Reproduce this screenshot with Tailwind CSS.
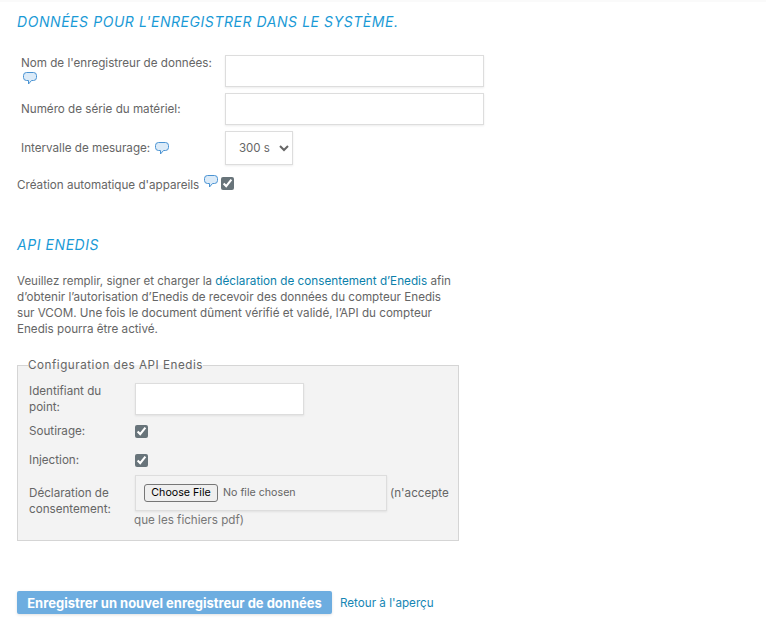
<!DOCTYPE html>
<html lang="fr">
<head>
<meta charset="utf-8">
<script src="https://cdn.jsdelivr.net/npm/@tailwindcss/browser@4"></script>
</head>
<body class="bg-white font-['Inter',sans-serif] text-[11.65px] leading-[16px] text-[#666]">
<svg class="hidden"><symbol id="b" viewBox="0 0 14 13"><path d="M3.500 .5h7a3 3 0 0 1 3 3v2a3 3 0 0 1-3 3H8.500L5.500 12V8.500h-2a3 3 0 0 1-3-3v-2a3 3 0 0 1 3-3z" fill="#dcebf8" stroke="#4a93d2" stroke-width="1"/></symbol></svg>
<div class="w-[766px] h-[626px] overflow-hidden pl-[17px]">
  <div class="h-[2px] -ml-[17px] bg-[#fafafa]"></div>
  <h2 class="mt-[12px] h-[16px] text-[14px] leading-[16px] italic tracking-[0.56px] text-[#1a9ad6] font-normal">DONNÉES POUR L'ENREGISTRER DANS LE SYSTÈME.</h2>

  <div class="mt-[25px] ml-[4px] flex">
    <div class="w-[204px]"><div>Nom de l'enregistreur de données:</div><svg class="mt-[1px] ml-[2px] w-[14px] h-[13px]"><use href="#b"/></svg></div>
    <input type="text" class="w-[259px] h-[32px] bg-white border border-[#ddd] shadow-[0_1px_2px_rgba(0,0,0,0.08)]">
  </div>
  <div class="mt-[6px] ml-[4px] flex items-center">
    <div class="w-[204px]">Numéro de série du matériel:</div>
    <input type="text" class="w-[259px] h-[32px] bg-white border border-[#ddd] shadow-[0_1px_2px_rgba(0,0,0,0.08)]">
  </div>
  <div class="mt-[6px] ml-[4px] flex items-center">
    <div class="w-[204px] flex items-center gap-[5px]"><span>Intervalle de mesurage:</span><svg class="w-[14px] h-[13px]"><use href="#b"/></svg></div>
    <select class="w-[68px] h-[34px] pl-[9px] bg-white border border-[#ddd] shadow-[0_1px_2px_rgba(0,0,0,0.08)] text-[11.5px] text-[#666]"><option>300 s</option></select>
  </div>
  <div class="mt-[10px] flex items-center h-[16px]">
    <span class="mt-[4px]">Création automatique d'appareils</span>
    <svg class="ml-[5px] -mt-[3px] w-[14px] h-[13px]"><use href="#b"/></svg>
    <input type="checkbox" checked class="ml-[3px] m-0 accent-[#68747a]">
  </div>

  <h2 class="mt-[46px] h-[16px] text-[14px] leading-[16px] italic tracking-[0.56px] text-[#1a9ad6] font-normal">API ENEDIS</h2>

  <p class="mt-[20px] w-[440px]"><span class="text-[11.55px]">Veuillez remplir, signer et charger la </span><a class="text-[11.72px] text-[#0b7fab]">déclaration de consentement d’Enedis</a> afin d’obtenir l’autorisation d’Enedis de recevoir des données du compteur Enedis sur VCOM. Une fois le document dûment vérifié et validé, l’API du compteur Enedis pourra être activé.</p>

  <fieldset class="mt-[21px] w-[442px] h-[183px] bg-[#f3f3f3] border border-[#d5d5d5] pl-[11px]">
    <legend class="ml-[-1px] tracking-[0.53px] leading-[14px] text-[#666]">Configuration des API Enedis</legend>
    <div class="flex mt-[11px]">
      <div class="w-[106px]">Identifiant du point:</div>
      <input type="text" class="w-[169px] h-[32px] bg-white border border-[#ddd] shadow-[0_1px_2px_rgba(0,0,0,0.08)]">
    </div>
    <div class="flex items-center mt-[8px] h-[16px]">
      <div class="w-[106px]">Soutirage:</div>
      <input type="checkbox" checked class="m-0 accent-[#68747a]">
    </div>
    <div class="flex items-center mt-[13px] h-[16px]">
      <div class="w-[106px]">Injection:</div>
      <input type="checkbox" checked class="m-0 accent-[#68747a]">
    </div>
    <div class="flex mt-[7px]">
      <div class="w-[106px] pt-[10px]">Déclaration de consentement:</div>
      <div class="w-[316px] leading-[16px]">
        <div class="flex items-start">
          <input type="file" class="shrink-0 w-[252px] h-[36px] pl-[8px] py-[8px] bg-[#f3f3f3] border border-[#ddd] shadow-[0_1px_2px_rgba(0,0,0,0.08)] text-[10.67px] text-[#666] file:text-[#000] file:bg-[#efefef] file:border file:border-[#767676] file:rounded-[3px] file:h-[18px] file:w-[74px] file:px-0 file:mr-[5px] file:text-[10.67px]">
          <span class="mt-[10px] ml-[3px]">(n'accepte</span>
        </div>
        <div class="mt-[1px] -ml-[1px] text-[#777]">que les fichiers pdf)</div>
      </div>
    </div>
  </fieldset>

  <div class="mt-[50px] flex items-center">
    <button class="w-[315px] h-[23px] bg-[#6dade0] rounded-[2px] text-white font-bold text-[13px] shadow-[0_1px_3px_rgba(0,0,0,0.12)]">Enregistrer un nouvel enregistreur de données</button>
    <a class="ml-[8px] text-[#1686b4]">Retour à l'aperçu</a>
  </div>
</div>
</body>
</html>
